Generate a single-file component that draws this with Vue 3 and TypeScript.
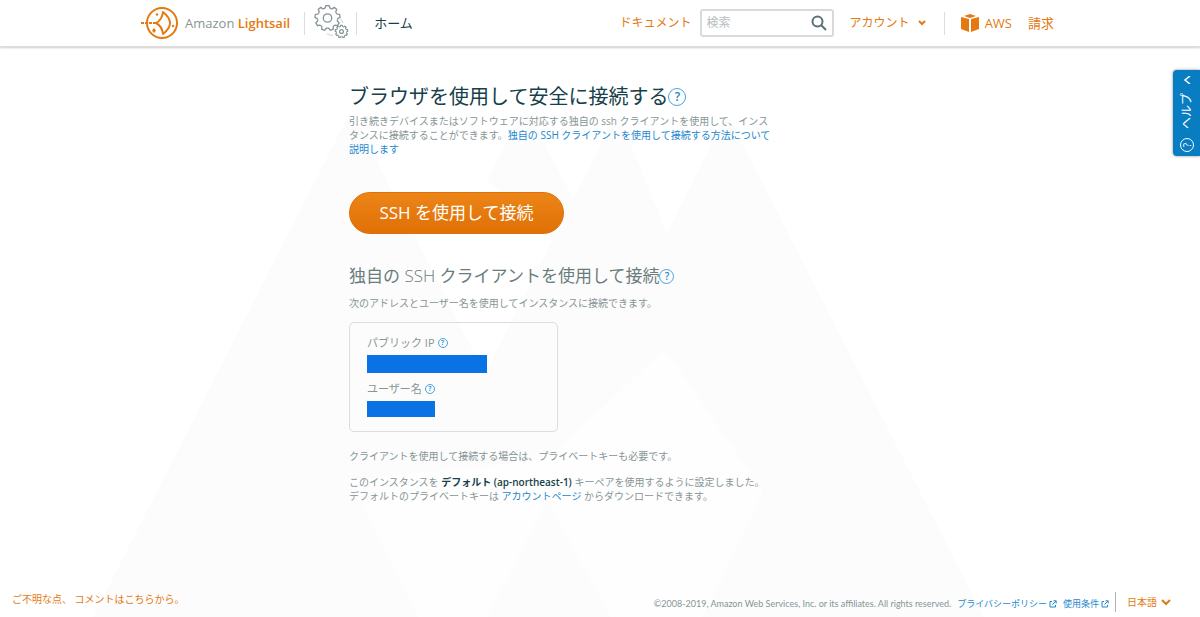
<script setup lang="ts">
import { ref } from 'vue'

const query = ref('')
const locale = ref('日本語')
const teeth = [0, 40, 80, 120, 160, 200, 240, 280, 320]
const toothPath = 'M-3.4 -9.4Q-2.5 -9.8-2.2-10.4L-1.6-12.5H1.6L2.2-10.4Q2.5-9.8 3.4-9.4'
</script>

<template>
  <div class="page">
    <svg class="peaks" viewBox="0 0 1200 617" preserveAspectRatio="xMidYMin slice" aria-hidden="true">
      <path d="M93 617 346 120Q351 110 356 120L608 617Z" />
      <path d="M487 180 520 116Q525 106 530 116L600 250 553 240Z" />
      <path d="M361 617 612 123Q617 113 622 123L667 233 722 123Q727 113 732 123L984 617Z" />
      <path class="snow" d="M350 480 418 617H487L547 500 611 617H703L763 492 665 349 547 460Z" />
    </svg>

    <header class="topbar">
      <div class="topbar-inner">
        <a class="brand" href="#">
          <svg class="brand-mark" viewBox="0 0 38 34" aria-hidden="true">
            <circle cx="21" cy="17" r="15" fill="none" stroke="#e47911" stroke-width="2" />
            <path d="M22 6Q36 17 22 28Q21 20 15 17Q21 14 22 6Z" fill="none" stroke="#e47911" stroke-width="2" stroke-linejoin="round" />
            <path d="M0 17H15" stroke="#e47911" stroke-width="2" stroke-dasharray="3 1" />
            <g fill="#e47911"><circle cx="16" cy="8.5" r="1.2" /><circle cx="32" cy="20" r="1.2" /><path d="M13 22 15 24.500 13 27 11 24.500Z" /></g>
          </svg>
          <span>Amazon <strong>Lightsail</strong></span>
        </a>
        <a class="gears" href="#" aria-label="設定">
          <svg viewBox="0 0 36 36" fill="none" stroke="#879596" stroke-width="1.3">
            <g transform="translate(14.5 13)">
              <circle r="4.2" />
              <path v-for="a in teeth" :key="a" :transform="`rotate(${a})`" :d="toothPath" />
            </g>
            <g transform="translate(28.5 26.5)">
              <circle r="1.9" />
              <path v-for="a in teeth" :key="a" :transform="`rotate(${a}) scale(.5)`" stroke-width="2.4" :d="toothPath" />
            </g>
            <path d="M14 28.500Q17 30.500 20 30.500M28 14 30 18" stroke="#d5dbdb" />
          </svg>
        </a>
        <a class="home" href="#">ホーム</a>
        <nav class="tools">
          <a class="docs" href="#">ドキュメント</a>
          <label class="search">
            <input v-model="query" type="text" placeholder="検索" aria-label="検索" />
            <svg viewBox="0 0 16 16" fill="none" stroke="#5b7076" stroke-width="2" aria-hidden="true"><circle cx="6.5" cy="6.5" r="5" /><path d="m10 10 5 5" /></svg>
          </label>
          <button class="account" type="button">アカウント
            <svg viewBox="0 0 8 6" fill="none" stroke="currentColor" stroke-width="2" aria-hidden="true"><path d="m1 1 3 3 3-3" /></svg>
          </button>
          <a class="aws" href="#">
            <svg viewBox="0 0 18 18" fill="#e47911" aria-hidden="true"><path d="M9 0 15 2 9 4 3 2ZM0 3 8 5V18L0 15ZM18 3 10 5V18L18 15Z" /></svg>AWS
          </a>
          <a href="#">請求</a>
        </nav>
      </div>
    </header>

    <button class="help-tab" type="button">
      <svg class="help-arrow" viewBox="0 0 8 8" fill="none" stroke="#fff" stroke-width="1.5" aria-hidden="true"><path d="M7 0 2 4 7 8" /></svg>
      <span class="help-text">ヘルプ</span>
      <span class="help-q">?</span>
    </button>

    <main class="content">
      <h1>ブラウザを使用して安全に接続する<button class="hint" type="button" aria-label="ヘルプ">?</button></h1>
      <p class="intro">引き続きデバイスまたはソフトウェアに対応する独自の ssh クライアントを使用して、インスタンスに接続することができます。<a href="#">独自の SSH クライアントを使用して接続する方法について説明します</a></p>
      <button class="connect" type="button">SSH を使用して接続</button>
      <h2>独自の <span class="light">SSH</span> クライアントを使用して接続<button class="hint mid" type="button" aria-label="ヘルプ">?</button></h2>
      <p class="lead">次のアドレスとユーザー名を使用してインスタンスに接続できます。</p>
      <dl class="card">
        <dt>パブリック IP<button class="hint small" type="button" aria-label="ヘルプ">?</button></dt>
        <dd class="ip"></dd>
        <dt>ユーザー名<button class="hint small" type="button" aria-label="ヘルプ">?</button></dt>
        <dd class="user"></dd>
      </dl>
      <p>クライアントを使用して接続する場合は、プライベートキーも必要です。</p>
      <p class="keys">このインスタンスを <strong>デフォルト (ap-northeast-1)</strong> キーペアを使用するように設定しました。<br />デフォルトのプライベートキーは <a href="#">アカウントページ</a> からダウンロードできます。</p>
    </main>

    <footer class="footer">
      <a class="feedback" href="#">ご不明な点、 コメントはこちらから。</a>
      <div class="legal">
        <span>©2008-2019, Amazon Web Services, Inc. or its affiliates. All rights reserved.</span>
        <a href="#">プライバシーポリシー<svg viewBox="0 0 8 8" fill="none" stroke="currentColor" aria-hidden="true"><path d="M3 1.5H1V7H6.5V5M4.5 .8H7.2V3.5M7 1 3.5 4.5" /></svg></a>
        <a href="#">使用条件<svg viewBox="0 0 8 8" fill="none" stroke="currentColor" aria-hidden="true"><path d="M3 1.5H1V7H6.5V5M4.5 .8H7.2V3.5M7 1 3.5 4.5" /></svg></a>
        <button class="lang" type="button">{{ locale }}
          <svg viewBox="0 0 10 7" fill="none" stroke="currentColor" stroke-width="2" aria-hidden="true"><path d="m1 1 4 4 4-4" /></svg>
        </button>
      </div>
    </footer>
  </div>
</template>

<style>
body { margin: 0; }
</style>

<style scoped>
.page {
  position: relative;
  display: flex;
  flex-direction: column;
  min-height: 100vh;
  overflow: hidden;
  background: #fff;
  color: #879596;
  font: 10px/14px "Open Sans", "Noto Sans CJK JP", sans-serif;
}
.page * { box-sizing: border-box; }
a { color: #1e88ce; text-decoration: none; }
button { padding: 0; border: 0; background: none; color: inherit; font: inherit; cursor: pointer; }
svg { flex: none; }
.peaks { position: absolute; inset: 0; width: 100%; height: 100%; fill: #fcfcfc; }
.snow { fill: #fefefe; }
.topbar { position: relative; border-bottom: 1px solid #ddd; background: #fff; box-shadow: 0 1px 2px #ccc; }
.topbar-inner { display: flex; align-items: center; height: 46px; max-width: 920px; margin: 0 auto; padding: 0 6px 0 1px; font-size: 13px; }
.brand { display: flex; align-items: center; gap: 6px; color: #879596; white-space: nowrap; }
.brand strong { color: #e47911; font-weight: 600; }
.brand-mark { width: 38px; height: 34px; }
.gears { display: flex; margin-left: 14px; padding: 0 7px 0 8px; border: solid #ddd; border-width: 0 1px; height: 23px; align-items: center; }
.gears svg { width: 36px; height: 36px; }
.home { margin-left: 17px; color: #16404a; }
.tools { display: flex; align-items: center; margin-left: auto; color: #e47911; white-space: nowrap; }
.tools a { color: #e47911; }
.tools .docs { margin-right: 8px; font-size: 12px; }
.search { display: flex; align-items: center; width: 134px; height: 28px; padding: 0 5px; border: 2px solid #d5dbdb; border-radius: 3px; background: #fff; }
.search input { flex: 1; min-width: 0; padding: 0; border: 0; outline: 0; background: none; font: inherit; font-size: 12px; }
.search input::placeholder { color: #b6bebf; }
.search svg { width: 16px; height: 16px; }
.account { display: flex; align-items: center; gap: 8px; margin-left: 16px; padding-right: 18px; border-right: 1px solid #ddd; height: 23px; font-size: 12px; }
.account svg { width: 8px; height: 6px; }
.aws { display: flex; align-items: center; gap: 6px; margin: 0 16px; }
.aws svg { width: 18px; height: 18px; }
.help-tab { position: absolute; top: 70px; right: 0; display: flex; flex-direction: column; align-items: center; justify-content: space-between; width: 27px; height: 86px; padding: 6px 0 4px; border-radius: 4px 0 0 4px; background: #087dc2; color: #fff; box-shadow: 0 0 3px #888; }
.help-arrow { width: 8px; height: 8px; }
.help-text { writing-mode: vertical-rl; text-orientation: sideways; transform: rotate(180deg); font-size: 12px; }
.help-q { width: 14px; height: 14px; border: 1px solid #fff; border-radius: 50%; font-size: 10px; line-height: 12px; transform: rotate(-90deg); }
.content { position: relative; width: 100%; max-width: 502px; margin: 0 auto; padding: 36px 78px 0 0; }
h1, h2, p, dl, dd { margin: 0; font-weight: 400; }
h1 { display: flex; align-items: center; color: #16404a; font-size: 20px; line-height: 28px; white-space: nowrap; }
h2 { display: flex; align-items: center; color: #6b7c7e; font-size: 17px; line-height: 24px; white-space: pre; }
.light { font-weight: 300; }
.hint { width: 18px; height: 18px; border: 1px solid #4aa3dc; border-radius: 50%; color: #1e88ce; font-size: 12px; font-weight: 600; line-height: 16px; text-align: center; }
.mid { width: 15px; height: 15px; font-size: 10px; line-height: 13px; }
.small { width: 10px; height: 10px; margin-left: 3px; font-size: 7px; line-height: 8px; }
.intro { padding-top: 3px; }
.connect { display: block; width: 215px; height: 42px; margin: 36px 0 30px; border: 1px solid #e07008; border-radius: 21px; background: linear-gradient(#ec8518, #e07005); color: #fff; font-size: 17px; }
.lead { margin-top: 8px; }
.card { width: 209px; margin: 12px 0 17px; padding: 12px 17px 14px; border: 1px solid #ddd; border-radius: 5px; }
dt { display: flex; align-items: center; font-size: 11px; line-height: 16px; }
.ip { width: 120px; height: 18px; margin: 4px 0 8px; background: #0972e4; }
.user { width: 68px; height: 16px; margin-top: 4px; background: #0972e4; }
.keys { margin-top: 12px; white-space: nowrap; }
.keys strong { color: #16404a; font-weight: 600; }
.footer { position: relative; display: flex; justify-content: space-between; align-items: flex-start; margin-top: auto; padding: 0 29px 5px 12px; }
.feedback { color: #e47911; }
.legal { display: flex; align-items: center; gap: 6px; font: 9px/14px Lato, "Noto Sans CJK JP", sans-serif; }
.legal > span, .legal > a { padding-top: 4px; }
.legal a { display: flex; align-items: center; gap: 2px; }
.legal a svg { width: 8px; height: 8px; }
.lang { display: flex; align-items: center; gap: 4px; height: 20px; padding-left: 11px; border-left: 1px solid #aab7b8; color: #e47911; font-size: 10px; }
.lang svg { width: 10px; height: 7px; }
</style>
